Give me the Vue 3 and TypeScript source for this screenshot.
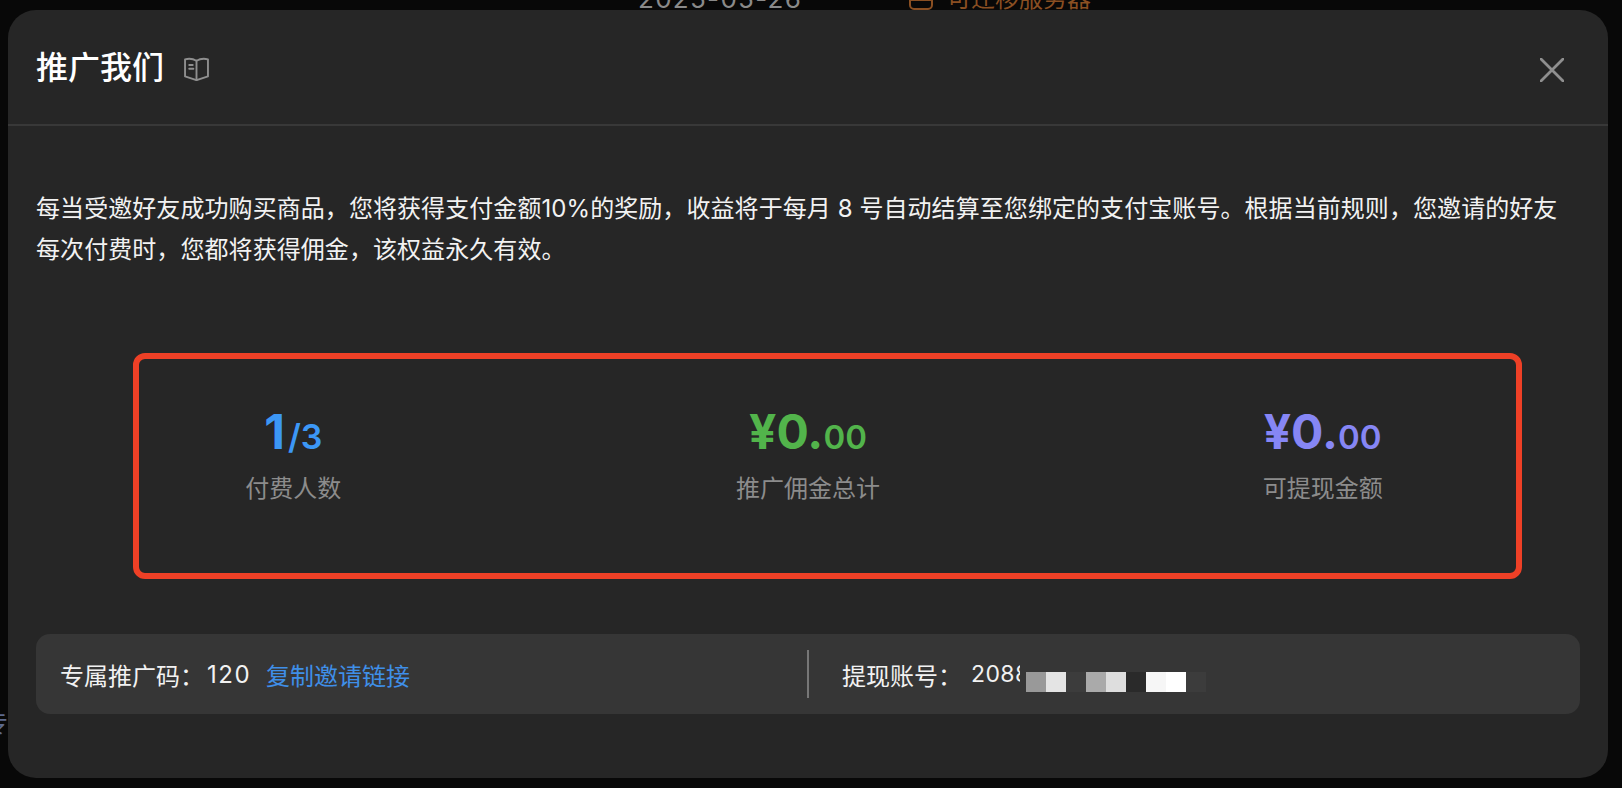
<script setup lang="ts">
interface Stat {
  main: string
  sub: string
  label: string
  tone: string
}

const stats: Stat[] = [
  { main: '1', sub: '/3', label: '付费人数', tone: 'blue' },
  { main: '¥0.', sub: '00', label: '推广佣金总计', tone: 'green' },
  { main: '¥0.', sub: '00', label: '可提现金额', tone: 'purple' },
]

const blurCells: string[] = ['#999999', '#e4e4e4', '#3c3c3c', '#aaaaaa', '#dedede', '#2a2a2a', '#f6f6f6', '#ffffff', '#3c3c3c']
</script>

<template>
  <div class="page">
    <div class="behind date">2025-05-26</div>
    <div class="behind migrate">
      <span class="migrate-icon"></span>
      <span>可迁移服务器</span>
    </div>
    <div class="behind fragment">专</div>

    <section class="modal">
      <header class="head">
        <h1 class="title">推广我们</h1>
        <svg class="book" viewBox="0 0 24 24" fill="none" stroke="#8f8f8f" stroke-width="1.8" stroke-linejoin="round" stroke-linecap="round">
          <path d="M1 3.2 Q7 1.6 12 4.6 Q17 1.6 23 3.2 V19.6 L12 23.2 L1 19.6 Z" />
          <path d="M12 4.6 V23" />
          <path d="M5 8.6 H8.4 M5 12.2 H9" />
        </svg>
        <svg class="close" viewBox="0 0 24 24" fill="none" stroke="#8f8f8f" stroke-width="2.8" stroke-linecap="round">
          <path d="M1 1 L23 23 M23 1 L1 23" />
        </svg>
      </header>

      <div class="body">
        <p class="intro">每当受邀好友成功购买商品，您将获得支付金额10%的奖励，收益将于每月 8 号自动结算至您绑定的支付宝账号。根据当前规则，您邀请的好友每次付费时，您都将获得佣金，该权益永久有效。</p>

        <div class="stats">
          <div v-for="s in stats" :key="s.label" class="stat">
            <div class="value" :class="s.tone">{{ s.main }}<span class="sub">{{ s.sub }}</span></div>
            <div class="label">{{ s.label }}</div>
          </div>
        </div>

        <div class="bar">
          <div class="bar-left">
            <span>专属推广码：</span>
            <span class="code">120</span>
            <a class="link">复制邀请链接</a>
          </div>
          <div class="bar-right">
            <span>提现账号：</span>
            <span class="account">2088</span>
            <span class="mosaic">
              <i v-for="(c, i) in blurCells" :key="i" :style="{ background: c }"></i>
            </span>
          </div>
        </div>
      </div>

      <div class="annotation"></div>
    </section>
  </div>
</template>

<style>
html, body { margin: 0; background: #080808; }
</style>

<style scoped>
.page {
  position: relative;
  box-sizing: border-box;
  width: 1622px;
  height: 788px;
  padding: 10px 14px 10px 8px;
  background: #080808;
  overflow: hidden;
  font-family: Inter, "Noto Sans CJK SC", sans-serif;
}
.behind { position: absolute; }
.date {
  left: 638px;
  top: -17px;
  font-size: 26px;
  line-height: 32px;
  letter-spacing: 1.3px;
  color: #8a8a8a;
}
.migrate {
  left: 909px;
  top: -17px;
  display: flex;
  align-items: center;
  gap: 14px;
  font-size: 24px;
  line-height: 32px;
  color: #8a4f22;
}
.migrate-icon {
  position: relative;
  box-sizing: border-box;
  width: 24px;
  height: 24px;
  margin-top: -2px;
  border: 2px solid #8a4f22;
  border-radius: 5px;
}
.migrate-icon::before {
  content: "";
  position: absolute;
  left: 0;
  right: 0;
  bottom: 7px;
  height: 2px;
  background: #8a4f22;
}
.fragment {
  left: -16px;
  top: 711px;
  font-size: 24px;
  line-height: 26px;
  color: #5d6a8c;
}
.modal {
  position: relative;
  z-index: 1;
  display: flex;
  flex-direction: column;
  height: 100%;
  background: #262626;
  border-radius: 28px;
  color: #f2f2f2;
}
.head {
  display: flex;
  align-items: center;
  box-sizing: border-box;
  height: 116px;
  padding: 2px 44px 0 28px;
  border-bottom: 2px solid #383838;
}
.title {
  margin: 0;
  font-size: 32px;
  line-height: 40px;
  font-weight: 500;
  color: #ffffff;
}
.book {
  width: 25px;
  height: 25px;
  margin-left: 20px;
}
.close {
  width: 24px;
  height: 24px;
  margin: 4px 0 0 auto;
}
.body {
  flex: 1;
  padding: 62px 28px 0;
}
.intro {
  margin: 0;
  padding-right: 10px;
  font-size: 24px;
  line-height: 41px;
  letter-spacing: 0.07px;
  color: #f2f2f2;
}
.stats {
  display: grid;
  grid-template-columns: repeat(3, 1fr);
  margin-top: 134px;
}
.stat {
  display: flex;
  flex-direction: column;
  align-items: center;
}
.value {
  font-size: 48px;
  line-height: 56px;
  font-weight: 700;
}
.sub {
  font-size: 33px;
  font-weight: 600;
}
.blue .sub {
  margin-left: 3px;
  font-size: 34px;
}
.blue { color: #3c97f5; }
.green { color: #52b44b; }
.purple { color: #8686f5; }
.label {
  margin-top: 8px;
  font-size: 24px;
  line-height: 32px;
  color: #8c8c8c;
}
.bar {
  display: flex;
  align-items: center;
  height: 80px;
  margin-top: 129px;
  padding: 0 24px;
  background: #363636;
  border-radius: 14px;
  font-size: 24px;
}
.bar-left {
  display: flex;
  align-items: center;
  width: 747px;
}
.code {
  margin-left: 3px;
  letter-spacing: 1.5px;
}
.link {
  margin-left: 15px;
  color: #3f8fe8;
}
.bar-right {
  display: flex;
  align-items: center;
  height: 48px;
  padding-left: 33px;
  border-left: 2px solid #777777;
}
.account {
  width: 49px;
  margin-left: 9px;
  overflow: hidden;
  font-size: 23px;
  letter-spacing: 0.4px;
}
.mosaic {
  display: flex;
  margin: 16px 0 0 6px;
}
.mosaic i {
  display: block;
  width: 20px;
  height: 20px;
}
.annotation {
  position: absolute;
  left: 125px;
  top: 343px;
  box-sizing: border-box;
  width: 1389px;
  height: 226px;
  border: 6px solid #ee4026;
  border-radius: 12px;
  pointer-events: none;
}
</style>
